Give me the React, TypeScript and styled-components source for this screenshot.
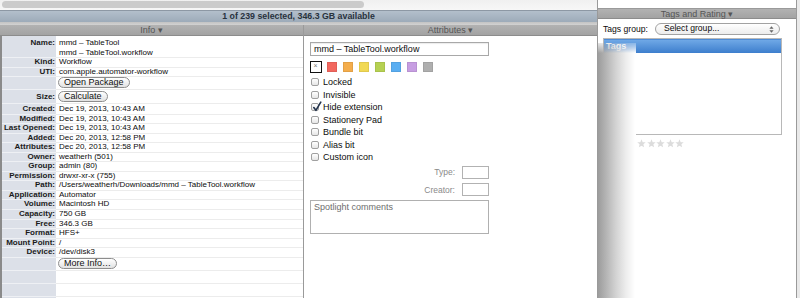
import styled, { createGlobalStyle } from 'styled-components';

const GlobalStyle = createGlobalStyle`
    html, body {
        margin: 0;
        padding: 0;
        background: #ffffff;
    }
    body {
        font-family: "Lucida Grande", "Liberation Sans", Arial, sans-serif;
        color: #0c0c0c;
    }
`;

const Screen = styled.div`
    width: 800px;
    height: 298px;
    display: flex;
    overflow: hidden;
    background: #e9e9e9;
`;

const LeftWindow = styled.div`
    width: 597px;
    flex-shrink: 0;
    display: flex;
    flex-direction: column;
    background: #ffffff;
`;

const ScrollTrack = styled.div`
    height: 10px;
    box-sizing: border-box;
    padding: 1px 2px 2px 2px;
    background: linear-gradient(#f0f0f0, #f7f7f7);
`;

const ScrollThumb = styled.div`
    width: 362px;
    height: 7px;
    border-radius: 4px;
    background: #cbcbcb;
`;

const StatusBar = styled.div`
    height: 12px;
    box-sizing: border-box;
    border-top: 1px solid #8d98a4;
    background: linear-gradient(#b3bfcb, #9dabb9);
    color: #28323d;
    font-size: 8.8px;
    font-weight: bold;
    line-height: 11px;
    text-align: center;
`;

const Separator = styled.div`
    height: 3px;
    background: linear-gradient(#c3c3c3, #d2d2d2);
`;

const Panes = styled.div`
    flex: 1;
    display: flex;
    min-height: 0;
`;

const InfoPane = styled.div`
    width: 303px;
    border-right: 1px solid #9a9a9a;
    display: flex;
    flex-direction: column;
`;

const AttrPane = styled.div`
    flex: 1;
    min-width: 0;
    display: flex;
    flex-direction: column;
`;

const PaneHeader = styled.div`
    height: 11px;
    box-sizing: border-box;
    border-bottom: 1px solid #8c8c8c;
    background: linear-gradient(#b2b2b2, #a3a3a3);
    color: #555;
    font-size: 9px;
    line-height: 10px;
    text-align: center;
`;

const InfoTable = styled.div`
    flex: 1;
    display: flex;
    flex-direction: column;
    border-left: 2px solid #8a8a8a;
    background: linear-gradient(to right, #dce0e8 54px, #ffffff 54px);
    padding-top: 2px;
`;

const Row = styled.div<{ h: number }>`
    display: grid;
    grid-template-columns: 54px 1fr;
    height: ${({ h }) => h}px;
    font-size: 8px;
    line-height: 9.55px;
`;

const Label = styled.div<{ top?: boolean }>`
    text-align: right;
    font-weight: bold;
    color: #1a1a1a;
    padding-right: 1px;
    box-sizing: border-box;
    border-bottom: 1px solid #eef0f4;
    white-space: nowrap;
    display: flex;
    align-items: ${({ top }) => (top ? 'flex-start' : 'center')};
    justify-content: flex-end;
`;

const Value = styled.div`
    padding-left: 3px;
    border-bottom: 1px solid #ececec;
    box-sizing: border-box;
    white-space: nowrap;
    display: flex;
    flex-direction: column;
    justify-content: center;
`;

const PushButton = styled.button`
    align-self: flex-start;
    margin-left: -1px;
    height: 11px;
    padding: 0 5px;
    border: 1px solid #8d8d8d;
    border-radius: 6px;
    background: linear-gradient(#ffffff, #e2e2e2);
    font-family: inherit;
    font-size: 9px;
    line-height: 9px;
    color: #111;
`;

const AttrBody = styled.div`
    display: flex;
    flex-direction: column;
    padding: 5.7px 0 0 6px;
`;

const NameField = styled.div`
    width: 179px;
    height: 14px;
    box-sizing: border-box;
    border: 1px solid #a8a8a8;
    box-shadow: inset 0 1px 1px rgba(0, 0, 0, 0.08);
    font-size: 9px;
    line-height: 12px;
    padding-left: 3px;
`;

const Swatches = styled.div`
    display: flex;
    align-items: center;
    gap: 6px;
    margin-top: 5.5px;
    height: 12px;
`;

const NoColor = styled.div`
    width: 12px;
    height: 12px;
    margin-left: -0.5px;
    margin-right: -0.5px;
    box-sizing: border-box;
    border: 1.5px solid #111;
    background: #fff;
    color: #777;
    font-size: 7px;
    line-height: 8.5px;
    text-align: center;
`;

const Swatch = styled.div<{ color: string }>`
    width: 10px;
    height: 9.5px;
    box-sizing: border-box;
    background: ${({ color }) => color};
    border: 1px solid rgba(0, 0, 0, 0.07);
`;

const CheckList = styled.div`
    margin-top: 3px;
    display: flex;
    flex-direction: column;
`;

const CheckRow = styled.div`
    height: 12.5px;
    display: flex;
    align-items: center;
    gap: 4px;
    font-size: 9px;
`;

const Box = styled.div`
    position: relative;
    width: 8px;
    height: 8px;
    margin-left: 1px;
    box-sizing: border-box;
    border: 1px solid #a0a0a0;
    border-radius: 2px;
    background: linear-gradient(#ffffff, #e6e6e6);

    svg {
        position: absolute;
        left: -0.5px;
        top: -3px;
    }
`;

const Fields = styled.div`
    width: 179px;
    display: flex;
    flex-direction: column;
`;

const FieldRow = styled.div<{ top: number }>`
    display: flex;
    justify-content: flex-end;
    align-items: center;
    gap: 7px;
    margin-top: ${({ top }) => top}px;
    font-size: 8.5px;
    color: #8a8a8a;
`;

const SmallField = styled.div`
    width: 27px;
    height: 13px;
    box-sizing: border-box;
    border: 1px solid #b2b2b2;
    background: #fff;
`;

const Comments = styled.div`
    margin-top: 4px;
    width: 179px;
    height: 34px;
    box-sizing: border-box;
    border: 1px solid #b0b0b0;
    padding: 1px 3px;
    font-size: 9px;
    color: #6e6e6e;
`;

const RightPanel = styled.div`
    flex-shrink: 0;
    width: 198px;
    border-left: 1px solid #9a9a9a;
    border-right: 1px solid #9a9a9a;
    background: #ffffff;
    display: flex;
    flex-direction: column;
    padding-top: 8px;
`;

const RightHeader = styled(PaneHeader)`
    border-top: 1px solid #9a9a9a;
`;

/* the edge shadow and the panel content share one grid cell */
const RightStack = styled.div`
    flex: 1;
    display: grid;
    grid-template-columns: 1fr;
    grid-template-rows: 1fr;
`;

const EdgeShadow = styled.div`
    grid-area: 1 / 1;
    width: 38px;
    margin-top: 24px;
    background: linear-gradient(to right, #9c9c9c, #b4b4b4 8px, #d3d3d3 18px, #ededed 28px, #ffffff 37px);
    -webkit-mask-image: linear-gradient(to bottom, rgba(0, 0, 0, 0.25), #000 10px);
    mask-image: linear-gradient(to bottom, rgba(0, 0, 0, 0.25), #000 10px);
`;

const RightBody = styled.div`
    grid-area: 1 / 1;
    display: flex;
    flex-direction: column;
    padding: 4px 0 0 5px;
`;

const GroupRow = styled.div`
    display: flex;
    align-items: center;
    gap: 7px;
    height: 11.5px;
    font-size: 8.6px;
`;

const Select = styled.div`
    position: relative;
    width: 125px;
    height: 11.5px;
    box-sizing: border-box;
    border: 1px solid #a2a2a2;
    border-radius: 6px;
    background: linear-gradient(#ffffff, #ececec);
    font-size: 8.6px;
    line-height: 9.5px;
    padding-left: 8px;

    svg {
        position: absolute;
        right: 5px;
        top: 1.5px;
    }
`;

const ListBox = styled.div`
    margin-top: 3px;
    width: 179px;
    height: 97px;
    box-sizing: border-box;
    border: 1px solid #b8b8b8;
`;

const ListHeader = styled.div`
    height: 14px;
    box-sizing: border-box;
    border-top: 1px solid #4d8bd6;
    background: linear-gradient(#6fa8e6, #3d7ecd);
    color: #fff;
    font-weight: bold;
    font-size: 9px;
    line-height: 12px;
    padding-left: 2px;
`;

const RatingRow = styled.div`
    display: flex;
    align-items: center;
    gap: 7px;
    margin-top: 4px;
    height: 10px;
    font-size: 8.5px;
`;

const Stars = styled.div`
    display: flex;
    gap: 0.6px;
`;

const TEXT_ROW = 9.55;

const infoRows: [string, string][] = [
    ['Created:', 'Dec 19, 2013, 10:43 AM'],
    ['Modified:', 'Dec 19, 2013, 10:43 AM'],
    ['Last Opened:', 'Dec 19, 2013, 10:43 AM'],
    ['Added:', 'Dec 20, 2013, 12:58 PM'],
    ['Attributes:', 'Dec 20, 2013, 12:58 PM'],
    ['Owner:', 'weatherh (501)'],
    ['Group:', 'admin (80)'],
    ['Permission:', 'drwxr-xr-x (755)'],
    ['Path:', '/Users/weatherh/Downloads/mmd – TableTool.workflow'],
    ['Application:', 'Automator'],
    ['Volume:', 'Macintosh HD'],
    ['Capacity:', '750 GB'],
    ['Free:', '346.3 GB'],
    ['Format:', 'HFS+'],
    ['Mount Point:', '/'],
    ['Device:', '/dev/disk3'],
];

const swatchColors = ['#f2675e', '#f4ad4c', '#f1d954', '#b6d152', '#5aaef2', '#c79ee2', '#afafaf'];

const checks: [string, boolean][] = [
    ['Locked', false],
    ['Invisible', false],
    ['Hide extension', true],
    ['Stationery Pad', false],
    ['Bundle bit', false],
    ['Alias bit', false],
    ['Custom icon', false],
];

const Check = () => (
    <svg width="10" height="11" viewBox="0 0 10 11">
        <path d="M1.8 6.6 L3.9 9.3 L8.8 1.2" fill="none" stroke="#22324c" strokeWidth="1.6" strokeLinecap="round" strokeLinejoin="round" />
    </svg>
);

const Star = () => (
    <svg width="9" height="9" viewBox="0 0 10 10">
        <polygon points="5,0.4 6.3,3.5 9.7,3.7 7.1,5.9 7.9,9.3 5,7.5 2.1,9.3 2.9,5.9 0.3,3.7 3.7,3.5" fill="#dcdcdc" />
    </svg>
);

const UpDown = () => (
    <svg width="5" height="7" viewBox="0 0 5 7">
        <polygon points="2.5,0.3 4.6,2.8 0.4,2.8" fill="#666" />
        <polygon points="2.5,6.7 4.6,4.2 0.4,4.2" fill="#666" />
    </svg>
);

export default function App() {
    return (
        <>
            <GlobalStyle />
            <Screen>
                <LeftWindow>
                    <ScrollTrack>
                        <ScrollThumb />
                    </ScrollTrack>
                    <StatusBar>1 of 239 selected, 346.3 GB available</StatusBar>
                    <Separator />
                    <Panes>
                        <InfoPane>
                            <PaneHeader>Info ▾</PaneHeader>
                            <InfoTable>
                                <Row h={TEXT_ROW * 2}>
                                    <Label top>Name:</Label>
                                    <Value>
                                        <span>mmd – TableTool</span>
                                        <span>mmd – TableTool.workflow</span>
                                    </Value>
                                </Row>
                                <Row h={TEXT_ROW}>
                                    <Label>Kind:</Label>
                                    <Value>Workflow</Value>
                                </Row>
                                <Row h={TEXT_ROW}>
                                    <Label>UTI:</Label>
                                    <Value>com.apple.automator-workflow</Value>
                                </Row>
                                <Row h={13.5}>
                                    <Label />
                                    <Value>
                                        <PushButton>Open Package</PushButton>
                                    </Value>
                                </Row>
                                <Row h={14.3}>
                                    <Label>Size:</Label>
                                    <Value>
                                        <PushButton>Calculate</PushButton>
                                    </Value>
                                </Row>
                                {infoRows.map(([label, value]) => (
                                    <Row key={label} h={TEXT_ROW}>
                                        <Label>{label}</Label>
                                        <Value>{value}</Value>
                                    </Row>
                                ))}
                                <Row h={14}>
                                    <Label />
                                    <Value>
                                        <PushButton>More Info…</PushButton>
                                    </Value>
                                </Row>
                                <Row h={13}>
                                    <Label />
                                    <Value />
                                </Row>
                                <Row h={13}>
                                    <Label />
                                    <Value />
                                </Row>
                            </InfoTable>
                        </InfoPane>
                        <AttrPane>
                            <PaneHeader>Attributes ▾</PaneHeader>
                            <AttrBody>
                                <NameField>mmd – TableTool.workflow</NameField>
                                <Swatches>
                                    <NoColor>×</NoColor>
                                    {swatchColors.map((c) => (
                                        <Swatch key={c} color={c} />
                                    ))}
                                </Swatches>
                                <CheckList>
                                    {checks.map(([label, on]) => (
                                        <CheckRow key={label}>
                                            <Box>{on && <Check />}</Box>
                                            {label}
                                        </CheckRow>
                                    ))}
                                </CheckList>
                                <Fields>
                                    <FieldRow top={2}>
                                        Type:
                                        <SmallField />
                                    </FieldRow>
                                    <FieldRow top={4.5}>
                                        Creator:
                                        <SmallField />
                                    </FieldRow>
                                </Fields>
                                <Comments>Spotlight comments</Comments>
                            </AttrBody>
                        </AttrPane>
                    </Panes>
                </LeftWindow>
                <RightPanel>
                    <RightHeader>Tags and Rating ▾</RightHeader>
                    <RightStack>
                        <EdgeShadow />
                        <RightBody>
                            <GroupRow>
                                Tags group:
                                <Select>
                                    Select group...
                                    <UpDown />
                                </Select>
                            </GroupRow>
                            <ListBox>
                                <ListHeader>Tags</ListHeader>
                            </ListBox>
                            <RatingRow>
                                Rating:
                                <Stars>
                                    {[0, 1, 2, 3, 4].map((i) => (
                                        <Star key={i} />
                                    ))}
                                </Stars>
                            </RatingRow>
                        </RightBody>
                    </RightStack>
                </RightPanel>
            </Screen>
        </>
    );
}
